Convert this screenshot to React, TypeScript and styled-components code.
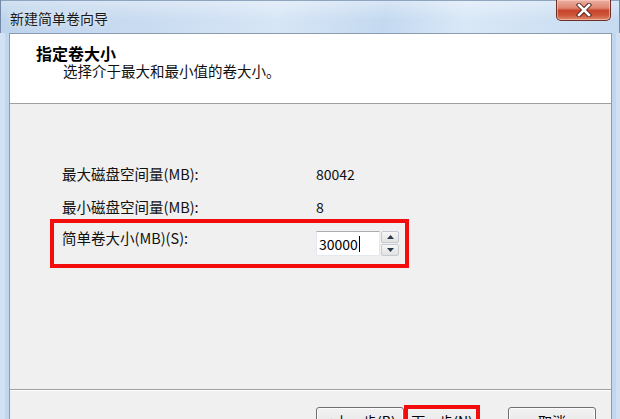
import React from 'react';
import styled, { createGlobalStyle } from 'styled-components';

const GlobalStyle = createGlobalStyle`
  html, body {
    margin: 0;
    padding: 0;
    overflow: hidden;
    background: #c3d8ef;
  }
  body {
    font-family: "Noto Sans CJK SC", "Noto Sans", sans-serif;
    color: #111;
  }
`;

const Window = styled.div`
  width: 620px;
  height: 419px;
  overflow: hidden;
  display: flex;
  flex-direction: column;
  background: #c1d7ef;
  box-shadow: inset 1px 0 #7389a6, inset -1px 0 #7389a6;
`;

const TitleBar = styled.div`
  height: 33px;
  flex: none;
  display: flex;
  align-items: flex-start;
  background:
    linear-gradient(to bottom, rgba(255, 255, 255, 0.35), rgba(255, 255, 255, 0) 60%),
    linear-gradient(100deg, #bcd3ec 0%, #cadcf1 25%, #d7e6f6 45%, #c4d9f0 62%, #d9e8f7 75%, #c6daf0 100%);
  box-shadow: inset 1px 0 #7389a6, inset -1px 0 #7389a6, inset 0 1px #8ea4bf;
`;

const Caption = styled.div`
  margin: 9px 0 0 10px;
  font-size: 14px;
  line-height: 18px;
  color: #1a1a1a;
  text-shadow: 0 0 6px rgba(255, 255, 255, 0.9);
`;

const CloseButton = styled.div`
  margin-left: auto;
  margin-right: 9px;
  width: 55px;
  height: 21px;
  box-sizing: border-box;
  border: 1px solid #6b2f27;
  border-top: none;
  border-radius: 0 0 5px 5px;
  display: flex;
  align-items: center;
  justify-content: center;
  background: linear-gradient(
    to bottom,
    #eab1a3 0%,
    #de8570 40%,
    #c8452d 52%,
    #cc5439 75%,
    #e08a6c 100%
  );
  box-shadow: inset 0 0 0 1px rgba(255, 210, 200, 0.55);
`;

const FrameBody = styled.div`
  flex: 1;
  min-height: 0;
  display: flex;
  padding: 0 8px 0 9px;
  box-shadow: inset 5px 0 #d2e2f4, inset -4px 0 #cfe0f3;
`;

const Client = styled.div`
  flex: 1;
  display: flex;
  flex-direction: column;
  background: #f0f0f0;
  border: 1px solid #8b9bb1;
  border-bottom: none;
`;

const Header = styled.div`
  height: 70px;
  flex: none;
  box-sizing: border-box;
  background: #fff;
  border-bottom: 1px solid #a0a0a0;
  padding: 11px 0 0 26px;
`;

const HeaderTitle = styled.div`
  font-size: 16px;
  line-height: 17px;
  font-weight: 700;
  color: #000;
`;

const HeaderSub = styled.div`
  margin-left: 27px;
  font-size: 14.5px;
  line-height: 17px;
  color: #111;
`;

const Content = styled.div`
  height: 285px;
  flex: none;
  box-sizing: border-box;
  padding: 58px 0 0 40px;
`;

const Row = styled.div`
  width: 359px;
  height: 24px;
  box-sizing: border-box;
  padding-left: 12px;
  display: grid;
  grid-template-columns: 254px auto;
  align-items: center;
  font-size: 14.5px;
  line-height: 24px;

  & + & {
    margin-top: 9px;
  }
`;

const Value = styled.span`
  font-size: 14px;
`;

const HighlightRow = styled.div`
  width: 359px;
  box-sizing: border-box;
  border: 4px solid #f20c0c;
  padding: 8px 6px 8px 8px;
  display: flex;
  align-items: flex-start;
`;

const FieldLabel = styled.div`
  width: 254px;
  flex: none;
  margin-top: -2px;
  font-size: 14.5px;
  line-height: 18px;
`;

const TextBox = styled.div`
  width: 64px;
  height: 25px;
  box-sizing: border-box;
  border: 1px solid #e3e9ef;
  border-top-color: #abadb3;
  background: #fff;
  padding-left: 2px;
  display: flex;
  align-items: center;
  font-size: 14px;
  color: #000;
`;

const Caret = styled.span`
  display: inline-block;
  width: 1px;
  height: 16px;
  margin-left: 1px;
  background: #000;
`;

const Spin = styled.div`
  width: 18px;
  height: 25px;
  margin-left: 1px;
  display: flex;
  flex-direction: column;
  gap: 1px;
`;

const SpinButton = styled.div`
  flex: 1;
  display: flex;
  align-items: center;
  justify-content: center;
  border: 1px solid #c5cad2;
  border-radius: 2px;
  background: linear-gradient(to bottom, #f6f6f6, #e2e2e2);
`;

const Footer = styled.div`
  flex: 1;
  display: flex;
  justify-content: flex-end;
  align-items: flex-start;
  border-top: 1px solid #a0a0a0;
  box-shadow: inset 0 1px #ffffff;
  padding: 17px 15px 0 0;
`;

const Button = styled.div<{ $width: number; $highlight?: boolean; $gap?: number }>`
  width: ${(p) => p.$width}px;
  height: 27px;
  box-sizing: border-box;
  margin-left: ${(p) => p.$gap ?? 0}px;
  display: flex;
  align-items: center;
  justify-content: center;
  font-size: 14px;
  color: #000;
  white-space: nowrap;
  border: 1px solid #707070;
  border-radius: 3px;
  background: linear-gradient(to bottom, #f2f2f2 0%, #ebebeb 48%, #dddddd 52%, #cfcfcf 100%);
  box-shadow: inset 0 0 0 1px #fbfbfb;
  ${(p) =>
    p.$highlight &&
    `
    margin-top: -2px;
    height: 31px;
    border: 4px solid #f20c0c;
    border-radius: 0;
    box-shadow: none;
  `}
`;

const CloseIcon = () => (
  <svg width="16" height="14" viewBox="0 0 16 14">
    <path d="M3 2 L13 12 M13 2 L3 12" stroke="#4a1e18" strokeWidth="4.4" strokeLinecap="square" />
    <path d="M3 2 L13 12 M13 2 L3 12" stroke="#ffffff" strokeWidth="2.6" strokeLinecap="square" />
  </svg>
);

const Arrow = ({ up }: { up?: boolean }) => (
  <svg width="7" height="4" viewBox="0 0 7 4">
    <path d={up ? 'M0 4 L3.5 0 L7 4 Z' : 'M0 0 L7 0 L3.5 4 Z'} fill="#2b3a4a" />
  </svg>
);

export default function App() {
  return (
    <>
      <GlobalStyle />
      <Window>
        <TitleBar>
          <Caption>新建简单卷向导</Caption>
          <CloseButton>
            <CloseIcon />
          </CloseButton>
        </TitleBar>
        <FrameBody>
          <Client>
            <Header>
              <HeaderTitle>指定卷大小</HeaderTitle>
              <HeaderSub>选择介于最大和最小值的卷大小。</HeaderSub>
            </Header>
            <Content>
              <Row>
                <span>最大磁盘空间量(MB):</span>
                <Value>80042</Value>
              </Row>
              <Row>
                <span>最小磁盘空间量(MB):</span>
                <Value>8</Value>
              </Row>
              <HighlightRow>
                <FieldLabel>简单卷大小(MB)(S):</FieldLabel>
                <TextBox>
                  30000
                  <Caret />
                </TextBox>
                <Spin>
                  <SpinButton>
                    <Arrow up />
                  </SpinButton>
                  <SpinButton>
                    <Arrow />
                  </SpinButton>
                </Spin>
              </HighlightRow>
            </Content>
            <Footer>
              <Button $width={88}>&lt; 上一步(B)</Button>
              <Button $width={76} $highlight>
                下一步(N)
              </Button>
              <Button $width={88} $gap={28}>
                取消
              </Button>
            </Footer>
          </Client>
        </FrameBody>
      </Window>
    </>
  );
}
